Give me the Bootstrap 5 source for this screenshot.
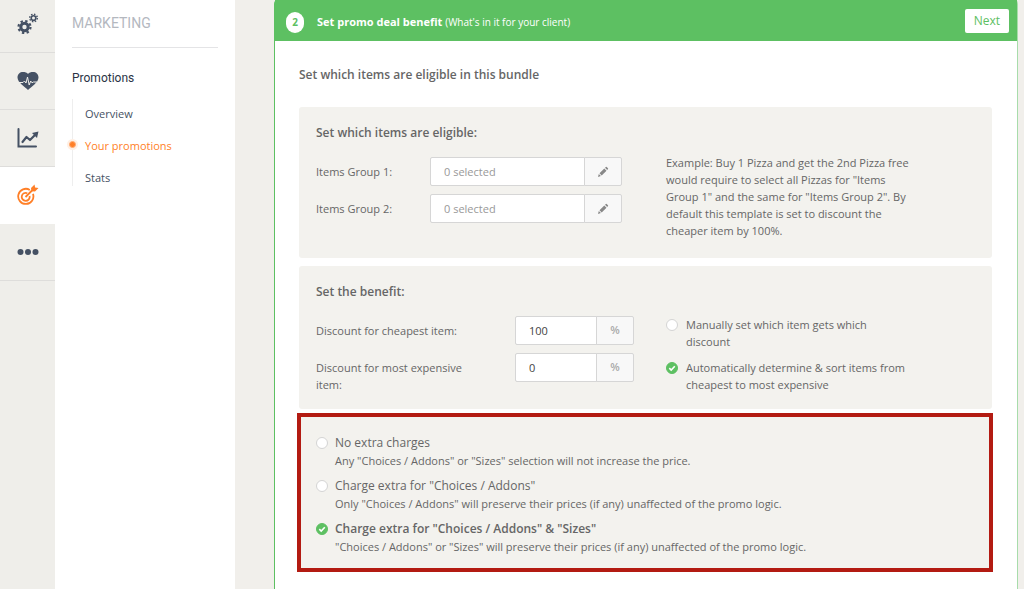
<!DOCTYPE html>
<html lang="en">
<head>
<meta charset="utf-8">
<meta name="viewport" content="width=device-width, initial-scale=1">
<title>Your promotions</title>
<link href="https://cdn.jsdelivr.net/npm/bootstrap@5.3.0/dist/css/bootstrap.min.css" rel="stylesheet">
<style>
  :root { --green: #5dc062; --orange: #ff7f27; --slate: #455164; --sand: #f3f2ee; }
  body { font-family: "Open Sans", sans-serif; font-size: 11px; line-height: 17px; color: #666; background: #f1efeb; }
  .rail { width: 55px; background: #efeeea; }
  .rail a { height: 57px; border-bottom: 1px solid #dedddb; color: var(--slate); }
  .rail a:first-child { height: 53px; padding-bottom: 4px; }
  .rail a.active { background: #fff; color: var(--orange); border-color: #fff; }
  .side { width: 180px; padding: 14px 17px; }
  .side-title { font: 400 14px/18px Roboto, sans-serif; color: #b4b8bf; padding-bottom: 15px; border-bottom: 1px solid #e4e4e6; }
  .side-group { font: 400 12px/18px Roboto, sans-serif; color: #2b3445; margin: 21px 0 12px; }
  .side-links { border-left: 1px solid #eee; gap: 15px; padding: 6px 0 0 12px; }
  .side-links a { color: var(--slate); text-decoration: none; }
  .side-links a.active { color: var(--orange); }
  .side-links a.active::before { content: ""; position: absolute; left: -16px; top: 4px; width: 7px; height: 7px; border: 1px solid #ffab73; border-radius: 50%; background: var(--orange); box-shadow: 0 0 0 2px #ffefe3; }
  .main-area { padding: 0 6px 0 39px; }
  .step { border: 1px solid var(--green); border-right-color: #a8dcab; border-width: 0 1px; background: #fff; border-radius: 4px 4px 0 0; }
  .step-head { background: var(--green); height: 41px; padding: 0 8px 0 11px; gap: 13px; color: #fff; }
  .step-num { width: 18px; height: 21px; margin-top: 3px; border-radius: 9px; background: #fff; color: var(--green); font-size: 10px; }
  .step-head h1 { font-size: 11px; line-height: 17px; font-weight: 700; margin-top: 3px; }
  .step-head h1 span { font-size: 10px; font-weight: 400; }
  .btn-next { background: #fff; color: var(--green); font-size: 12px; line-height: 16px; padding: 4px 9px; border: 0; border-radius: 2px; }
  .step-body { padding: 25px 25px 17px 24px; }
  h2, h3 { font-size: 12px; line-height: 17px; font-weight: 600; }
  h2 { margin: 0 0 24px; }
  h3 { margin: 0 0 13px; }
  .panel { background: var(--sand); border-radius: 3px; padding: 17px 17px 19px; margin-bottom: 8px; }
  .split { display: grid; grid-template-columns: 350fr 246fr 63fr; }
  .fields { gap: 8px; padding-top: 3px; }
  .field-label { padding-top: 6px; width: 114px; }
  .panel-benefit { padding-bottom: 16px; margin-bottom: 4px; }
  .panel-benefit .field-label { width: 199px; padding-right: 40px; }
  .pick { width: 192px; height: 29px; }
  .percent { width: 119px; height: 29px; }
  .input-group .form-control { font: inherit; padding: 0 13px; border: 1px solid #d6d6d6; border-radius: 2px; color: #444; }
  .input-group .form-control::placeholder { color: #999; }
  .side-box { width: 38px; padding: 0; justify-content: center; font-size: 11px; font-weight: 600; color: #aaa; background: #f8f8f8; border: 1px solid #d6d6d6; border-radius: 2px; }
  button.side-box { color: #888; line-height: 1; }
  .choices { padding-top: 3px; }
  .choice { padding: 0; min-height: 0; margin: 0 0 8px; gap: 8px; }
  .choices .choice { margin-bottom: 9px; }
  .choice:last-child, .choices .choice:last-child { margin-bottom: 0; }
  .choice .form-check-input { float: none; flex: none; width: 12px; height: 12px; margin: 3px 0 0; border: 1px solid #d4d4d4; background-color: #fff; }
  .choice .form-check-input:checked { background-color: var(--green); border-color: var(--green);
    background-size: 12px 12px; background-position: center;
    background-image: url("data:image/svg+xml,%3Csvg xmlns='http://www.w3.org/2000/svg' viewBox='0 0 12 12'%3E%3Cpath d='M3.3 6.1 5.2 8 8.8 4.2' fill='none' stroke='%23fff' stroke-width='1.6'/%3E%3C/svg%3E"); }
  .extras { background: var(--sand); border: 4px solid #b31b12; margin: 0 -1px 0 -2px; padding: 17px 15px 13px; }
  .extras .choice { gap: 7px; }
  .extras label { font-size: 12px; }
  .extras .picked { font-weight: 600; }
  .extras small { display: block; font-size: 11px; line-height: 17px; font-weight: 400; padding-top: 1px; }
</style>
</head>
<body>
<div class="d-flex min-vh-100">
  <nav class="rail flex-shrink-0 d-flex flex-column" aria-label="Sections">
    <a href="#" class="d-flex align-items-center justify-content-center" aria-label="Setup">
      <svg width="22" height="22" viewBox="0 0 22 22" fill="none" stroke="currentColor">
        <circle cx="7.500" cy="14" r="3.700" stroke-width="3"/>
        <circle cx="7.500" cy="14" r="6" stroke-width="2.200" stroke-dasharray="2.350 2.362"/>
        <circle cx="16.500" cy="5" r="2.300" stroke-width="1.600"/>
        <circle cx="16.500" cy="5" r="3.800" stroke-width="1.400" stroke-dasharray="1.500 1.485"/>
      </svg>
    </a>
    <a href="#" class="d-flex align-items-center justify-content-center" aria-label="Health">
      <svg width="22" height="20" viewBox="0 0 22 20">
        <path fill="currentColor" d="M11 19C8 16 .5 11.500.5 6.500.5 3 3 1 6 1c2 0 4 .5 5 2 1-1.500 3-2 5-2 3 0 5.500 2 5.500 5.500C21.500 11.500 14 16 11 19z"/>
        <path fill="none" stroke="#efeeea" stroke-width="1" d="M2 11.500h4l1.500-1.500 1.500 2 1.500-6 1.700 8 1.500-4 1.300 1.800 1.500-.8H20"/>
      </svg>
    </a>
    <a href="#" class="d-flex align-items-center justify-content-center" aria-label="Reports">
      <svg width="22" height="22" viewBox="0 0 22 22" fill="none" stroke="currentColor" stroke-width="2" stroke-linecap="round">
        <path d="M1.500 2v17.500H19"/>
        <path stroke-width="2.200" stroke-linejoin="round" d="m5.500 15 4-5 3.500 3 5-5"/>
        <path fill="currentColor" stroke="none" d="m15 6 6.500-1.500L20 11z"/>
      </svg>
    </a>
    <a href="#" class="active d-flex align-items-center justify-content-center" aria-label="Marketing">
      <svg width="22" height="22" viewBox="0 0 22 22" fill="none" stroke="currentColor" stroke-width="1.800">
        <path d="M12.800 5.900A7.600 7.600 0 1 0 16 9.900"/>
        <path d="M10.300 9.200A4 4 0 1 0 12.600 12"/>
        <path d="m8.500 13 7-7"/>
        <path fill="currentColor" stroke="none" d="m14 4 3.500-3.500.6 3 3.400.4L18 7.600l-3.500-.4z"/>
      </svg>
    </a>
    <a href="#" class="d-flex align-items-center justify-content-center" aria-label="Other">
      <svg width="22" height="8" viewBox="0 0 22 8" fill="currentColor"><circle cx="3.500" cy="4" r="3"/><circle cx="11" cy="4" r="3"/><circle cx="18.500" cy="4" r="3"/></svg>
    </a>
  </nav>

  <aside class="side flex-shrink-0 bg-white">
    <div class="side-title">MARKETING</div>
    <div class="side-group">Promotions</div>
    <nav class="side-links d-flex flex-column" aria-label="Promotions">
      <a href="#">Overview</a>
      <a href="#" class="active position-relative">Your promotions</a>
      <a href="#">Stats</a>
    </nav>
  </aside>

  <main class="main-area flex-grow-1 d-flex">
    <section class="step flex-grow-1">
      <header class="step-head d-flex align-items-center">
        <span class="step-num d-flex align-items-center justify-content-center fw-bold">2</span>
        <h1 class="mb-0 me-auto">Set promo deal benefit <span>(What's in it for your client)</span></h1>
        <button type="button" class="btn btn-next">Next</button>
      </header>
      <div class="step-body">
        <h2>Set which items are eligible in this bundle</h2>

        <div class="panel">
          <h3>Set which items are eligible:</h3>
          <div class="split">
            <div class="fields d-flex flex-column">
              <div class="d-flex">
                <label class="field-label" for="g1">Items Group 1:</label>
                <div class="input-group pick flex-nowrap">
                  <input id="g1" type="text" class="form-control" placeholder="0 selected">
                  <button type="button" class="btn side-box" aria-label="Edit group 1"><svg width="12" height="12" viewBox="0 0 12 12" fill="currentColor"><path d="m1 11 .8-3L3.900 10.100zM2.500 7.300 7.300 2.500 9.500 4.700 4.700 9.500zM8 1.800l.9-.8q.4-.3.800 0L11 2.300q.3.400 0 .8l-.8.900z"/></svg></button>
                </div>
              </div>
              <div class="d-flex">
                <label class="field-label" for="g2">Items Group 2:</label>
                <div class="input-group pick flex-nowrap">
                  <input id="g2" type="text" class="form-control" placeholder="0 selected">
                  <button type="button" class="btn side-box" aria-label="Edit group 2"><svg width="12" height="12" viewBox="0 0 12 12" fill="currentColor"><path d="m1 11 .8-3L3.900 10.100zM2.500 7.300 7.300 2.500 9.500 4.700 4.700 9.500zM8 1.800l.9-.8q.4-.3.800 0L11 2.300q.3.400 0 .8l-.8.900z"/></svg></button>
                </div>
              </div>
            </div>
            <p class="mb-0">Example: Buy 1 Pizza and get the 2nd Pizza free would require to select all Pizzas for "Items Group 1" and the same for "Items Group 2". By default this template is set to discount the cheaper item by 100%.</p>
          </div>
        </div>

        <div class="panel panel-benefit">
          <h3>Set the benefit:</h3>
          <div class="split">
            <div class="fields d-flex flex-column">
              <div class="d-flex">
                <label class="field-label" for="d1">Discount for cheapest item:</label>
                <div class="input-group percent flex-nowrap">
                  <input id="d1" type="text" class="form-control" value="100">
                  <span class="input-group-text side-box">%</span>
                </div>
              </div>
              <div class="d-flex">
                <label class="field-label" for="d2">Discount for most expensive item:</label>
                <div class="input-group percent flex-nowrap">
                  <input id="d2" type="text" class="form-control" value="0">
                  <span class="input-group-text side-box">%</span>
                </div>
              </div>
            </div>
            <div class="choices">
              <div class="form-check choice d-flex">
                <input class="form-check-input" type="radio" name="sort" id="s1">
                <label for="s1">Manually set which item gets which discount</label>
              </div>
              <div class="form-check choice d-flex">
                <input class="form-check-input" type="radio" name="sort" id="s2" checked>
                <label for="s2">Automatically determine &amp; sort items from cheapest to most expensive</label>
              </div>
            </div>
          </div>
        </div>

        <div class="extras">
          <div class="form-check choice d-flex">
            <input class="form-check-input" type="radio" name="extra" id="e1">
            <label for="e1">No extra charges <small>Any "Choices / Addons" or "Sizes" selection will not increase the price.</small></label>
          </div>
          <div class="form-check choice d-flex">
            <input class="form-check-input" type="radio" name="extra" id="e2">
            <label for="e2">Charge extra for "Choices / Addons" <small>Only "Choices / Addons" will preserve their prices (if any) unaffected of the promo logic.</small></label>
          </div>
          <div class="form-check choice d-flex">
            <input class="form-check-input" type="radio" name="extra" id="e3" checked>
            <label for="e3" class="picked">Charge extra for "Choices / Addons" &amp; "Sizes" <small>"Choices / Addons" or "Sizes" will preserve their prices (if any) unaffected of the promo logic.</small></label>
          </div>
        </div>
      </div>
    </section>
  </main>
</div>
<script src="https://cdn.jsdelivr.net/npm/bootstrap@5.3.0/dist/js/bootstrap.bundle.min.js"></script>
</body>
</html>
